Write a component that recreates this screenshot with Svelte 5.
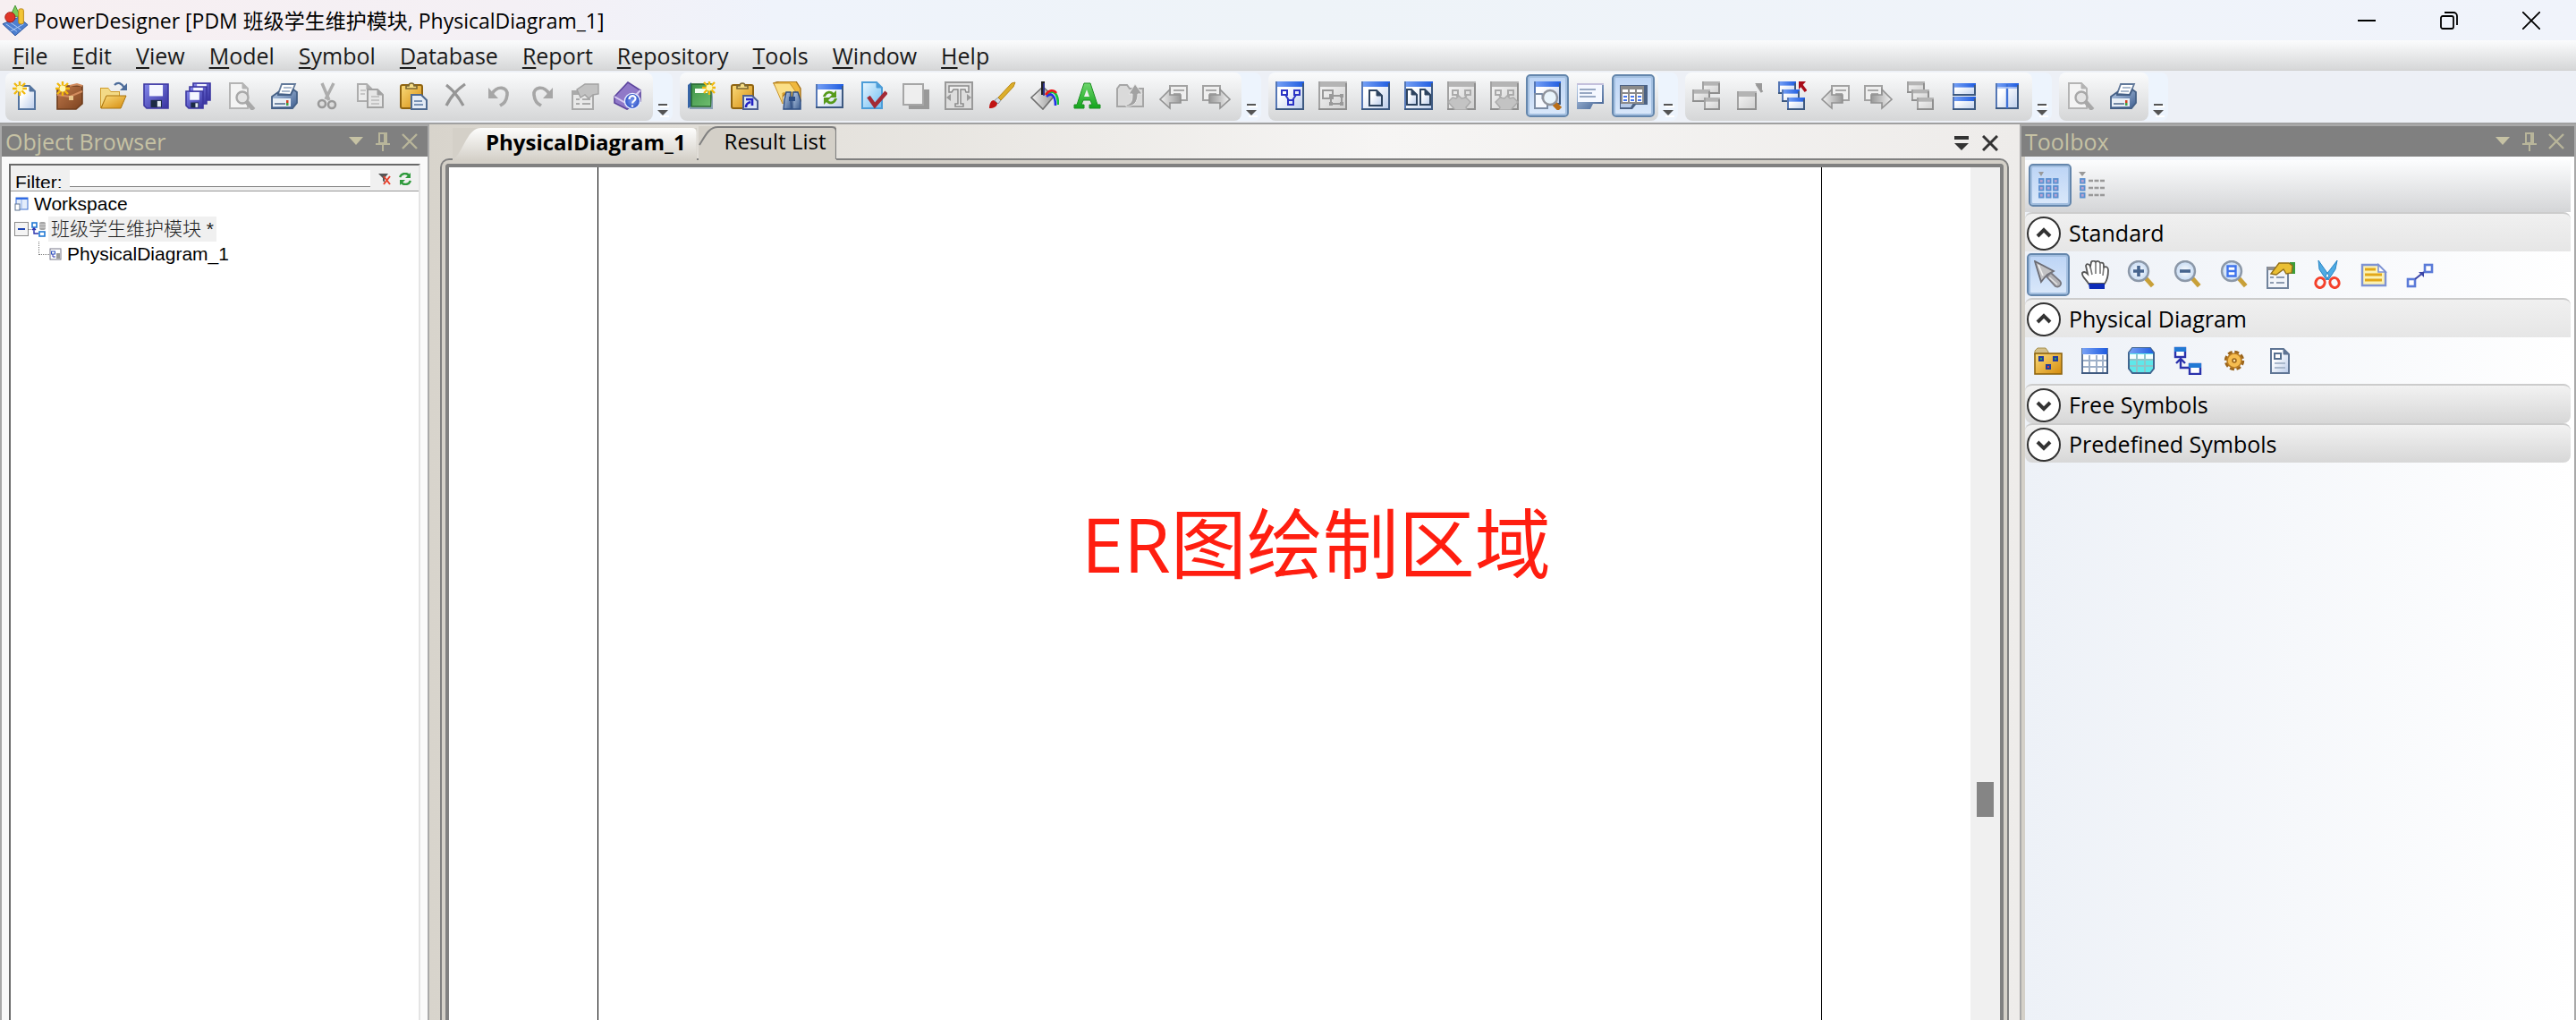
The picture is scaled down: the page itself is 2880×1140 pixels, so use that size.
<script>
  // Icons are drawn on a 32-unit grid.
  const win = (x, y, w, h, t = 'b') => {
    const c = { b: ['#5577b5', 'url(#gTitle)', 'url(#gBody)', '#3d5980'], g: ['#a2a2a2', '#b4b4b4', 'url(#gBodyG)', '#8f8f8f'] }[t];
    return `<rect x="${x}" y="${y}" width="${w}" height="${h}" fill="${c[2]}"/><rect x="${x}" y="${y}" width="${w}" height="${Math.min(6, h / 3)}" fill="${c[1]}"/><path d="M${x + 1} ${y}V${y + h}" stroke="${c[0]}" stroke-width="2"/><path d="M${x} ${y + h - 1}H${x + w - 1}V${y + 2}" fill="none" stroke="${c[3]}" stroke-width="2"/>`;
  };
  const spark = (x, y) => `<path d="M${x} ${y - 8}v16M${x - 8} ${y}h16M${x - 6} ${y - 6}l12 12M${x + 6} ${y - 6}l-12 12" stroke="#f2b90c" stroke-width="2.4"/><circle cx="${x}" cy="${y}" r="3.4" fill="#fff7b0"/>`;
  const lens = (x, y, r, c = '#8c98a8') => `<path d="M${x + r * 0.7} ${y + r * 0.7}l8 9" stroke="${c === '#a8a8a8' ? '#a8a8a8' : '#c8a038'}" stroke-width="5"/><circle cx="${x}" cy="${y}" r="${r}" fill="${c === '#a8a8a8' ? '#e4e4e4' : 'url(#gLens)'}" stroke="${c}" stroke-width="2.4"/>`;
  const page = (x, y, w, h, s, f) => `<path d="M${x} ${y}h${w - 6}l6 6v${h - 6}h-${w}z" fill="${f}" stroke="${s}" stroke-width="2"/><path d="M${x + w - 6} ${y}v6h6" fill="${s}" stroke="${s}"/>`;
  const nodes = (s, x, y) => `<g fill="none" stroke="${s}" stroke-width="2"><rect x="${x}" y="${y}" width="6" height="5"/><rect x="${x + 14}" y="${y}" width="6" height="5"/><rect x="${x + 7}" y="${y + 11}" width="6" height="5"/><path d="M${x + 4} ${y + 5}l4 6M${x + 16} ${y + 5}l-4 6"/></g>`;
  const arrowNote = (flip) => `<g${flip ? ' transform="matrix(-1 0 0 1 32 0)"' : ''}><path d="M12 5h19v16H12z" fill="#efefef" stroke="#a2a2a2" stroke-width="2"/><path d="M16 10h12M16 14h8" stroke="#aaa" stroke-width="2"/><path d="M1 20L12 9v6h12v9H12v6z" fill="url(#gGrey)" stroke="#929292" stroke-width="1.6"/></g>`;
  const clip = `<rect x="2" y="4" width="24" height="26" rx="2" fill="url(#gGold)" stroke="#8f6310" stroke-width="2"/><path d="M8 8h12V5h-3a3 3 0 0 0-6 0H8z" fill="#f5dc84" stroke="#7b6733" stroke-width="1.6"/>`;
  const disk = (x, y, w) => `<path d="M${x} ${y}h${w}v${w}h-${w - 3}l-3-3z" fill="url(#gDisk)" stroke="#3b36a0" stroke-width="1.6"/><rect x="${x + w * 0.22}" y="${y + 1}" width="${w * 0.56}" height="${w * 0.46}" fill="#f4f6ff"/><rect x="${x + w * 0.28}" y="${y + w * 0.66}" width="${w * 0.46}" height="${w * 0.3}" fill="#1c2b44"/><rect x="${x + w * 0.55}" y="${y + w * 0.7}" width="${w * 0.15}" height="${w * 0.24}" fill="#e6edf5"/>`;
  const printer = `<path d="M9 14L13 3h15l-5 12z" fill="#fff" stroke="#62799a" stroke-width="1.8"/><path d="M15 7h9M13 11h9" stroke="#8ea2bd" stroke-width="1.6"/><path d="M2 17l7-5v3h14l3-6 4 3v12l-5 6H2z" fill="url(#gSteel)" stroke="#456086" stroke-width="1.8"/><rect x="3" y="19" width="20" height="9" fill="#e9f0f7"/><path d="M5 25h12" stroke="#7288a5" stroke-width="2"/><rect x="18" y="21" width="2.5" height="3" fill="#d2401f"/><rect x="18" y="24" width="2.5" height="3" fill="#42a044"/>`;
  const preview = `${page(3, 2, 20, 28, '#b4b4b4', '#f4f4f4')}${lens(17, 18, 6.5, '#a8a8a8')}`;
  const hand = (c, s) => `<path d="M1 23l5-5 4 1 3-3 3 3 5-1 5 5-5 6 1 3H9z" fill="${c}" stroke="${s}" stroke-width="1.4"/>`;

  const icons = {
    new: page(7, 5, 18, 26, '#54749f', 'url(#gBody)') + spark(8, 8),
    project: `<path d="M2 9l6-4h22v20l-7 6H2z" fill="url(#gBrown)" stroke="#6e3c1c" stroke-width="1.6"/><path d="M2 15l14 2 14-6M16 5l8-2 6 2" fill="none" stroke="#d28b5d" stroke-width="2"/><path d="M15 16h5v5h-5z" fill="#e8c489"/>` + spark(8, 8),
    open: `<path d="M2 7h9l3 4h10v19H2z" fill="#cf9b28"/><path d="M3 8h8l3 4h9v4H9L3 28z" fill="#f3da86"/><path d="M3 30L9 16h22l-6 14z" fill="url(#gGold)" stroke="#a97410"/><path d="M18 4c4-4 8-2 11 3" fill="none" stroke="#4d6c9a" stroke-width="2.4"/><path d="M32 2v8h-8z" fill="#4d6c9a"/>`,
    save: disk(3, 3, 27),
    saveall: disk(10, 2, 19) + disk(6, 6, 19) + disk(2, 11, 19),
    preview, printer,
    cut: `<path d="M10 2l8 19M23 2l-9 18" stroke="#adadad" stroke-width="3.4"/><g fill="#dcdcdc" stroke="#999" stroke-width="2.6"><circle cx="10" cy="25" r="4"/><circle cx="21" cy="26" r="4"/></g>`,
    copy: page(2, 3, 16, 19, '#adadad', '#ececec') + page(13, 9, 17, 20, '#a2a2a2', '#e6e6e6') + `<path d="M5 10h6M5 14h5M17 17h9M17 21h9M17 25h9" stroke="#bbb" stroke-width="1.6"/>`,
    paste: clip + `<path d="M14 15h11l6 6v10H14z" fill="#e3ebf5" stroke="#4e6a90" stroke-width="2"/><path d="M17 22h9M17 26h10" stroke="#7a93b5" stroke-width="2"/>`,
    del: `<path d="M5 4c8 6 14 14 19 23M26 3C17 9 10 17 5 27" fill="none" stroke="#969696" stroke-width="3.2"/>`,
    undo: `<path d="M4 7v12h11z" fill="#a6a6a6"/><path d="M8 14C14 4 26 6 25 15s-5 10-8 12" fill="none" stroke="#a6a6a6" stroke-width="3.6"/>`,
    redo: `<path d="M28 7v12H17z" fill="#a6a6a6"/><path d="M24 14C18 4 6 6 7 15s5 10 8 12" fill="none" stroke="#a6a6a6" stroke-width="3.6"/>`,
    props: `<rect x="2" y="11" width="23" height="20" fill="#e8e8e8" stroke="#a9a9a9" stroke-width="2"/><path d="M3 13h21" stroke="#aaa" stroke-width="4"/><path d="M6 20h4M6 25h4M13 20h9M13 25h9" stroke="#aaa" stroke-width="2"/><path d="M7 9l9-6h15v11l-6 1-5 4-4-4-5 3z" fill="#c2c2c2" stroke="#a2a2a2" stroke-width="1.4"/>`,
    help: `<path d="M1 17L16 1l14 9v12L15 31 1 24z" fill="#9079c8" stroke="#5d459e" stroke-width="1.6"/><path d="M1 17l14 8 15-15" fill="none" stroke="#d9cdf2" stroke-width="2"/><circle cx="21" cy="22" r="8.6" fill="url(#gHelp)" stroke="#e6ecff" stroke-width="1.4"/><path d="M17.5 20c0-5 7-5 7-1 0 3-3.4 2.6-3.4 5.4M21 26.6v2" fill="none" stroke="#fff" stroke-width="2.2"/>`,

    book: `<path d="M1 4l4-3v27l-4 2z" fill="#3664a5"/><rect x="5" y="3" width="22" height="25" fill="url(#gGreen)" stroke="#286b34" stroke-width="1.6"/><path d="M3 29h24l2-23v25H3z" fill="#8aa0b4"/><rect x="9" y="8" width="14" height="5" fill="#f3fff0"/>` + spark(25, 7),
    pasteLink: clip + `<path d="M15 16h10l6 6v9H15z" fill="#dce6f5" stroke="#4d5f92" stroke-width="2"/><path d="M18 29c0-4 2-5 5-6M18 20h7v7" fill="none" stroke="#2222c4" stroke-width="2.6"/>`,
    find: `<path d="M1 2l6-2h19l5 8v14l-7 2-8-13-5 6z" fill="#f0b83c" stroke="#a5721a" stroke-width="1.4"/><path d="M1 2h18l7 10-15 1v12z" fill="#fbdf86" stroke="#c9942c"/><g fill="url(#gSteel)" stroke="#2c4d83" stroke-width="1.4"><path d="M15 12h5v8l1 11h-9l1-10z"/><path d="M23 12h5l3 9v10h-9v-11z"/></g><rect x="18" y="17" width="7" height="5" fill="#2c4d83"/>`,
    refresh: win(0, 3, 31, 27) + `<path d="M8 17c2-7 9-8 12-4l3-3v8h-8l3-3c-3-3-6-1-7 2zM24 19c-2 7-9 8-12 4l-3 3v-8h8l-3 3c3 3 6 1 7-2z" fill="#569a1c"/>`,
    check: page(4, 1, 22, 29, '#4c9dd8', 'url(#gSky)') + `<path d="M11 17l7 10L31 12" fill="none" stroke="#a32a35" stroke-width="4.4"/>`,
    shadow: `<path d="M7 9h24v22H8z" fill="#999"/><rect x="2" y="3" width="22" height="23" fill="#eee" stroke="#a6a6a6" stroke-width="2"/>`,
    text: `<rect x="1" y="1" width="30" height="30" fill="#ddd" stroke="#999" stroke-width="2"/><path d="M5 5h22v7h-3l-1-3h-5v16h3v3h-9v-3h3V9h-5l-2 3H5z" fill="#eee" stroke="#8b8b8b" stroke-width="1.5"/><path d="M2 18l5-4v8zM30 18l-5-4v8z" fill="#999"/>`,
    brush: `<path d="M2 30c0-5 2-9 5-9l4 3c0 4-4 6-9 6z" fill="#c01414"/><path d="M8 21l4 4 3-4-3-3z" fill="#d4dce5" stroke="#8b97a6"/><path d="M12 18L27 2l4-1-2 5-14 15z" fill="#dcae2a" stroke="#b88714"/>`,
    fill: `<path d="M1 18L14 6l12 11-12 14z" fill="url(#gGrey)" stroke="#6e6e6e" stroke-width="1.6"/><path d="M14 0v15" stroke="#222" stroke-width="4"/><path d="M15 2v14" stroke="#3036a0" stroke-width="1.6"/><path d="M18 14c7-5 13-2 13 12" fill="none" stroke="#12c33b" stroke-width="2.6"/><path d="M18 17c5-5 10-2 10 10" fill="none" stroke="#2031e8" stroke-width="2.6"/><path d="M17 15c4-6 9-6 12-2" fill="none" stroke="#f01616" stroke-width="2.6"/>`,
    font: `<path d="M12 2h7l8 24h3v4H18v-4h3l-2-5h-8l-2 5h3v4H1v-4h3z" fill="url(#gA)" stroke="#1c8f22"/><path d="M15 9l3 8h-6z" fill="#f0f0f0"/>`,
    folderUp: `<path d="M1 8l3-4h8l3 4h15v20H1z" fill="#dadada" stroke="#a6a6a6" stroke-width="2"/><path d="M11 26c6-1 7-4 7-12h-4l7-11 8 11h-5c0 9-4 14-13 14z" fill="#a2a2a2" stroke="#e8e8e8"/>`,
    back: arrowNote(false), forward: arrowNote(true),

    diagram: win(0, 0, 32, 32) + nodes('#2b34c4', 7, 10),
    group: win(0, 0, 32, 32, 'g') + `<g fill="none" stroke="#999" stroke-width="2"><rect x="5" y="10" width="11" height="9"/><rect x="14" y="16" width="12" height="9"/></g><path d="M12 14h4v4h-4zM24 14h4v4h-4zM12 23h4v4h-4zM24 23h4v4h-4z" fill="#999"/>`,
    onePage: win(0, 0, 32, 32) + page(9, 10, 14, 17, '#2e4460', 'url(#gBody)'),
    twoPage: win(0, 0, 32, 32) + page(3, 9, 11, 17, '#2e4460', 'url(#gBody)') + page(18, 9, 11, 17, '#2e4460', 'url(#gBody)'),
    handLeft: win(0, 0, 32, 32, 'g') + nodes('#aaa', 6, 10) + hand('#c3c3c3', '#aaa'),
    handRight: win(0, 0, 32, 32, 'g') + nodes('#aaa', 6, 10) + `<g transform="matrix(-1 0 0 1 32 0)">${hand('#c3c3c3', '#aaa')}</g>`,
    zoomWin: win(1, 0, 30, 26) + page(2, 14, 14, 16, '#7b8ca4', '#f6f9fe') + `<path d="M23 24l7 7" stroke="#b96d16" stroke-width="6"/><circle cx="19" cy="18" r="8" fill="#e9f4fb" stroke="#90949c" stroke-width="2.4"/>`,
    note: `<path d="M1 3h30v22H19l-3 6H1z" fill="url(#gSteel)"/><path d="M2 4h27v19H2z" fill="#f5f8ff"/><path d="M4 9h18M4 13h14M4 17h18" stroke="#7a8db0" stroke-width="1.6"/><path d="M1 3h30" stroke="#c4c0dc" stroke-width="2"/>`,
    tableNote: `<path d="M1 4h31v22H19l-4 5H1z" fill="#4c6284"/><path d="M2 24h14l-3 5H2z" fill="#b7cbe8"/><rect x="3" y="6" width="24" height="18" fill="#fff" stroke="#8b8b8b" stroke-width="2"/><path d="M3 8h24M3 13h24M11 6v18M19 6v18" stroke="#8b8b8b" stroke-width="2"/><path d="M5 17h4M13 17h4M21 17h4M5 21h4M13 21h4M21 21h4" stroke="#4778ee" stroke-width="2"/>`,

    winGroup: win(11, 0, 20, 14, 'g') + win(0, 9, 20, 14, 'g') + win(13, 18, 18, 14, 'g'),
    winOut: win(2, 11, 22, 21, 'g') + `<path d="M22 2h8v8z" fill="#999"/><path d="M24 3l6 9" stroke="#999" stroke-width="3"/>`,
    winCascadeRed: win(0, 0, 20, 14) + win(4, 9, 20, 14) + win(10, 18, 20, 14) + `<path d="M23 0h8l-8 9z" fill="#a90c19"/><path d="M25 3l6 8" stroke="#a90c19" stroke-width="3.4"/>`,
    winCascade: win(0, 0, 20, 13, 'g') + win(5, 9, 20, 13, 'g') + win(11, 18, 19, 14, 'g'),
    tileH: win(3, 2, 26, 14) + win(3, 17, 26, 15),
    tileV: win(3, 2, 26, 29) + `<path d="M16 3v27" stroke="#3f72d8" stroke-width="2.4"/><path d="M5 7h22" stroke="#fff" stroke-width="1"/>`,

    grid: `<path d="M3 1h6L6 6z" fill="#999"/>` + [4, 12, 20].flatMap((x) => [9, 17, 25].map((y) => `<rect x="${x}" y="${y}" width="4.6" height="4.6" fill="#b9a2cf" stroke="#5b90d0" stroke-width="1.8"/>`)).join(''),
    list: `<path d="M0 1h8L4 6z" fill="#999"/>` + [9, 17, 25].map((y) => `<rect x="2" y="${y}" width="4.6" height="4.6" fill="#b9a2cf" stroke="#5b90d0" stroke-width="1.8"/><path d="M11 ${y + 2}h18" stroke="#999" stroke-width="2.4" stroke-dasharray="5 1.5"/>`).join(''),
    pointer: `<path d="M1 1l7 23 4-5 3-3 7-4z" fill="#c2c2c4" stroke="#6c6c74" stroke-width="1.8"/><path d="M5 5l5 12" stroke="#efefef" stroke-width="1.6"/><path d="M14 18l5-4 10 9c3 4-1 8-5 6z" fill="#b2b2b6" stroke="#77777f" stroke-width="1.8"/><path d="M17 19l9 8" stroke="#e2e2e2" stroke-width="1.6"/>`,
    pan: `<path d="M9 26C7 22 1 18 2 14c2-2 4-1 6 1L6 6c1-3 4-2 5 1l1-5c1-2 4-2 5 0 2-2 4-1 5 1 3-1 4 0 4 3v2c3-2 5 0 5 3 0 7-1 11-4 15z" fill="#fff" stroke="#555" stroke-width="1.8"/><path d="M11 7l2 9M17 2v13M22 4v11M26 8l-1 9" stroke="#777" stroke-width="1.6"/><path d="M9 26h18v6H10z" fill="#0d2cb8"/>`,
    zoomIn: lens(13, 12, 11) + `<path d="M13 6v12M7 12h12" stroke="#46648e" stroke-width="3.6"/>`,
    zoomOut: lens(13, 12, 11) + `<path d="M7 12h12" stroke="#46648e" stroke-width="3.6"/>`,
    zoomPage: lens(13, 12, 11) + `<path d="M8.5 6.5h9v11h-9zM8 12h10" fill="#fff" stroke="#3e73ec" stroke-width="2.4"/>`,
    propsColor: `<rect x="1" y="8" width="23" height="23" fill="#f2f5fa" stroke="#71839c" stroke-width="2"/><path d="M1 9h23" stroke="#8f8f92" stroke-width="4"/><path d="M4 19h4M4 25h4M11 19h9M11 25h9" stroke="#8d9bb0" stroke-width="2"/><path d="M26 2h6v13h-6z" fill="#3c9c3a"/><path d="M5 15l9-12h11l4 3-1 8-6 1-3-5-8 6z" fill="#eabf33" stroke="#93701a" stroke-width="1.4"/>`,
    scissors: `<path d="M6 0l12 17-3 5L7 10zM27 0L14 17l3 5 8-12z" fill="#4fabe4" stroke="#2985c4"/><g fill="none" stroke="#f4402a" stroke-width="3"><ellipse cx="8" cy="25" rx="5" ry="5.6" transform="rotate(22 8 25)"/><ellipse cx="24" cy="25" rx="5" ry="5.6" transform="rotate(-22 24 25)"/></g>`,
    memo: `<path d="M3 5h18l8 8v15H3z" fill="#fcf2b4" stroke="#7e93d4" stroke-width="2.4"/><path d="M21 5v8h8z" fill="#fff" stroke="#7e93d4" stroke-width="1.6"/><path d="M6 10h12M6 16h19M6 22h19" stroke="#e2a818" stroke-width="3"/>`,
    link: `<g fill="#fff" stroke="#5a7ad8" stroke-width="2.6"><rect x="2" y="21" width="8" height="8"/><rect x="21" y="5" width="8" height="8"/></g><path d="M10 21L20 13" stroke="#3c46a8" stroke-width="2"/><path d="M14 13h6v6z" fill="#3c46a8"/>`,
    package: `<path d="M1 5l3-3h9l3 4v4H1z" fill="#d4c08a" stroke="#a8914e"/><rect x="1" y="8" width="30" height="23" fill="url(#gGold)" stroke="#8e640f" stroke-width="1.6"/><g fill="#2fa05c" stroke="#223c9c" stroke-width="2"><rect x="6" y="12" width="4" height="4"/><rect x="22" y="12" width="4" height="4"/><rect x="14" y="21" width="4" height="4" fill="#d43a3a"/></g>`,
    table: `<rect x="2" y="3" width="28" height="27" fill="#fff" stroke="#5f789c" stroke-width="2"/><rect x="2" y="2" width="28" height="7" fill="url(#gTitle)"/><path d="M3 16h26M3 23h26M10 10v19M18 10v19M25 10v19" stroke="#9eb0c8" stroke-width="2"/><path d="M1 30h29V9" fill="none" stroke="#3f5a80" stroke-width="2"/>`,
    view: `<path d="M6 2h20l4 5v18l-4 5H6l-4-5V7z" fill="#5ee8ea" stroke="#41658f" stroke-width="2"/><path d="M6 2h20l4 6H2z" fill="url(#gTitle)"/><path d="M3 9h26v5H3z" fill="#f2ffff"/><path d="M3 15h26M3 22h26M11 9v20M20 9v20" stroke="#8fc4c8" stroke-width="2"/>`,
    reference: `<g fill="#fff" stroke="#2b32ac" stroke-width="2.4"><rect x="2" y="2" width="11" height="10"/><rect x="18" y="20" width="12" height="11"/></g><path d="M1 1h13v5H1zM17 19h14v5H17z" fill="#2279d4"/><path d="M8 15v9h9M3 19l5-5 5 5" fill="none" stroke="#2b32ac" stroke-width="2.4"/>`,
    gear: `<circle cx="16" cy="16" r="9" fill="none" stroke="#9a641c" stroke-width="4.4" stroke-dasharray="4.6 2.47"/><circle cx="16" cy="16" r="8" fill="#f6bd50" stroke="#b97c22" stroke-width="1.6"/><circle cx="16" cy="16" r="2" fill="#fde7ae" stroke="#9a641c" stroke-width="1.6"/>`,
    file: page(5, 3, 20, 27, '#5f7594', 'url(#gBody)') + `<rect x="9" y="8" width="7" height="6" fill="#fff" stroke="#57708f" stroke-width="2"/><path d="M9 19h12M9 24h12" stroke="#a9b8cc" stroke-width="2"/>`,
  };

  const toolbars = [
    { name: 'Standard', tools: ['new', 'project', 'open', 'save', 'saveall', 'preview', 'printer', 'cut', 'copy', 'paste', 'del', 'undo', 'redo', 'props', 'help'] },
    { name: 'Diagram', tools: ['book', 'pasteLink', 'find', 'refresh', 'check', 'shadow', 'text', 'brush', 'fill', 'font', 'folderUp', 'back', 'forward'] },
    { name: 'View', tools: ['diagram', 'group', 'onePage', 'twoPage', 'handLeft', 'handRight', 'zoomWin', 'note', 'tableNote'] },
    { name: 'Window', tools: ['winGroup', 'winOut', 'winCascadeRed', 'back', 'forward', 'winCascade', 'tileH', 'tileV'] },
    { name: 'Print', tools: ['preview', 'printer'] },
  ];
  const menus = ['File', 'Edit', 'View', 'Model', 'Symbol', 'Database', 'Report', 'Repository', 'Tools', 'Window', 'Help'];
  const sections = [
    { title: 'Standard', tools: ['pointer', 'pan', 'zoomIn', 'zoomOut', 'zoomPage', 'propsColor', 'scissors', 'memo', 'link'] },
    { title: 'Physical Diagram', tools: ['package', 'table', 'view', 'reference', 'gear', 'file'] },
    { title: 'Free Symbols', tools: [] },
    { title: 'Predefined Symbols', tools: [] },
  ];
  let pressed = $state(['zoomWin', 'tableNote', 'grid', 'pointer']);
  let filter = $state('');
</script>

{#snippet icon(name)}
  <svg class="icon" viewBox="0 0 32 32" aria-hidden="true">{@html icons[name]}</svg>
{/snippet}

{#snippet tool(name)}
  <button class="tool" class:pressed={pressed.includes(name)} aria-label={name}>{@render icon(name)}</button>
{/snippet}

{#snippet panelHead(title)}
  <header class="panel-head">
    <h2>{title}</h2>
    <button aria-label="{title} options"><svg width="18" height="18" viewBox="0 0 18 18"><path d="M1 4h16l-8 9z" fill="#c6c2a4" /></svg></button>
    <button aria-label="Pin {title}"><svg width="18" height="22" viewBox="0 0 18 22"><path d="M5 2h8v11H5zM1 14h16M9 14v8M11 2v11" fill="none" stroke="#b8b59a" stroke-width="2" /></svg></button>
    <button aria-label="Close {title}"><svg width="18" height="18" viewBox="0 0 18 18"><path d="M1 1l16 16M17 1L1 17" stroke="#b8b59a" stroke-width="2.4" /></svg></button>
  </header>
{/snippet}

<svg class="defs" aria-hidden="true">
  <defs>
    <linearGradient id="gTitle" x2="1"><stop stop-color="#78a2f5" /><stop offset="1" stop-color="#1f5ce0" /></linearGradient>
    <linearGradient id="gBody" x2="1" y2="1"><stop offset=".3" stop-color="#fff" /><stop offset="1" stop-color="#b9cbea" /></linearGradient>
    <linearGradient id="gBodyG" x2="1" y2="1"><stop offset=".2" stop-color="#f0f0f0" /><stop offset="1" stop-color="#cdcdcd" /></linearGradient>
    <linearGradient id="gGold" x2="1" y2="1"><stop stop-color="#fbdc7c" /><stop offset="1" stop-color="#d58b0c" /></linearGradient>
    <linearGradient id="gBrown" x2="1" y2="1"><stop stop-color="#c07a4c" /><stop offset="1" stop-color="#7c421f" /></linearGradient>
    <linearGradient id="gDisk" x2="1" y2="1"><stop stop-color="#8488ec" /><stop offset="1" stop-color="#37329f" /></linearGradient>
    <linearGradient id="gSteel" x2="1" y2="1"><stop stop-color="#bcd0ea" /><stop offset="1" stop-color="#3c5c8e" /></linearGradient>
    <linearGradient id="gGrey" x2="1"><stop stop-color="#f2f2f2" /><stop offset="1" stop-color="#989898" /></linearGradient>
    <linearGradient id="gGreen" x2="1" y2="1"><stop stop-color="#3f9448" /><stop offset="1" stop-color="#6fbd6f" /></linearGradient>
    <linearGradient id="gSky" x2="1" y2="1"><stop stop-color="#eaf7ff" /><stop offset="1" stop-color="#6dbdf2" /></linearGradient>
    <linearGradient id="gA" x2="0" y2="1"><stop stop-color="#6ed56c" /><stop offset="1" stop-color="#12a41b" /></linearGradient>
    <radialGradient id="gLens"><stop stop-color="#fff" /><stop offset="1" stop-color="#c5daf3" /></radialGradient>
    <radialGradient id="gHelp"><stop stop-color="#7e9cf2" /><stop offset="1" stop-color="#2c50c4" /></radialGradient>
  </defs>
</svg>

<div class="app">
  <header class="titlebar">
    <svg class="logo" viewBox="0 0 32 36" aria-hidden="true">
      <path d="M1 22L20 14l11 9-15 13z" fill="#4d7fd0" stroke="#2c529a" /><path d="M5 22l13 9M10 20l13 9M26 22l-16 9" stroke="#b4cff6" />
      <path d="M16 0l6 13H10z" fill="#7fcb5a" stroke="#3e8f31" /><circle cx="10" cy="14" r="6" fill="#e03528" stroke="#a31912" /><rect x="20" y="4" width="6" height="18" rx="2" fill="#f3c536" stroke="#b68212" />
    </svg>
    <h1>PowerDesigner [PDM 班级学生维护模块, PhysicalDiagram_1]</h1>
    <div class="caption">
      <button aria-label="Minimize"><svg width="20" height="20" viewBox="0 0 20 20"><path d="M0 10h20" stroke="#000" stroke-width="2" /></svg></button>
      <button aria-label="Restore"><svg width="20" height="20" viewBox="0 0 20 20"><g fill="none" stroke="#000" stroke-width="1.8"><rect x="1" y="5" width="14" height="14" rx="2" /><path d="M5 1h10a4 4 0 0 1 4 4v10" /></g></svg></button>
      <button aria-label="Close"><svg width="20" height="20" viewBox="0 0 20 20"><path d="M0 0l20 20M20 0L0 20" stroke="#000" stroke-width="1.8" /></svg></button>
    </div>
  </header>

  <nav class="menubar">
    {#each menus as m}<button><u>{m[0]}</u>{m.slice(1)}</button>{/each}
  </nav>

  <div class="toolbars">
    {#each toolbars as bar}
      <div class="bar" role="toolbar" aria-label={bar.name}>
        <div class="tools">{#each bar.tools as t}{@render tool(t)}{/each}</div>
        <button class="more" aria-label="More {bar.name} buttons"><svg width="14" height="16" viewBox="0 0 14 16"><path d="M4 4h10M4 15h10" stroke="#fff" stroke-width="2" /><path d="M2 2h10" stroke="#555" stroke-width="2" /><path d="M1 8h12l-6 6z" fill="#555" /></svg></button>
      </div>
    {/each}
  </div>

  <main>
    <aside class="panel browser">
      {@render panelHead('Object Browser')}
      <div class="browser-body">
        <div class="browser-frame">
          <div class="filter">
            <label for="filter">Filter:</label>
            <input id="filter" bind:value={filter} />
            <button aria-label="Clear filter"><svg width="14" height="14" viewBox="0 0 14 14"><path d="M0 1h11L7 6v5l-2-2V6z" fill="#555" /><path d="M6 4l7 9M13 4l-7 9" stroke="#e8412c" stroke-width="2" /></svg></button>
            <button aria-label="Refresh"><svg width="14" height="14" viewBox="0 0 14 14"><path d="M1 5c2-5 8-5 10-2M13 9c-2 5-8 5-10 2" fill="none" stroke="#2f9a3c" stroke-width="2.4" /><path d="M13 0v6H7zM1 14V8h6z" fill="#2f9a3c" /></svg></button>
          </div>
          <ul class="tree">
            <li class="row"><svg width="16" height="16" viewBox="0 0 16 16"><rect x="2" y="1" width="13" height="13" fill="#e4edfb" stroke="#3d6fd0" /><path d="M2 2h13" stroke="#2f6be6" stroke-width="2" /><path d="M8 3v11" stroke="#8fb0ea" /><rect x="1" y="8" width="5" height="7" fill="#fff" stroke="#5c7290" /></svg><span>Workspace</span></li>
            <li class="row model">
              <button class="twisty" aria-label="Collapse"></button>
              <i class="dots"></i>
              <svg width="16" height="18" viewBox="0 0 16 18"><rect x="1" y="2" width="5" height="5" fill="#fff" stroke="#2279d4" stroke-width="1.6" /><rect x="9" y="12" width="6" height="5" fill="#fff" stroke="#2279d4" stroke-width="1.6" /><path d="M3 8v6h5M1 10l2-2 2 2" fill="none" stroke="#2b32ac" stroke-width="1.4" /><rect x="9" y="1" width="7" height="9" rx="2" fill="#a5a5a5" /><path d="M9 4h7M9 7h7" stroke="#ddd" /></svg>
              <span class="current">班级学生维护模块 *</span>
            </li>
            <li class="row diagram">
              <i class="elbow"></i>
              <svg width="14" height="14" viewBox="0 0 14 14"><rect x="1" y="1" width="12" height="12" fill="#fff" stroke="#778" /><rect x="2.5" y="4" width="4" height="3" fill="none" stroke="#2b4fc0" /><path d="M4 7v3h3" fill="none" stroke="#2b32ac" /><rect x="8" y="6" width="4" height="6" fill="#999" /></svg>
              <span>PhysicalDiagram_1</span>
            </li>
          </ul>
        </div>
      </div>
    </aside>

    <section class="editor">
      <div class="tabs">
        <button class="tab active"><svg viewBox="0 0 274 36" preserveAspectRatio="none" aria-hidden="true"><defs><linearGradient id="gTab" x2="0" y2="1"><stop stop-color="#fdfdfc" /><stop offset="1" stop-color="#d4d0c8" /></linearGradient></defs><path d="M0 36C12 28 16 0 32 0H269q5 0 5 5V36z" fill="url(#gTab)" /></svg><span>PhysicalDiagram_1</span></button>
        <button class="tab"><svg viewBox="0 0 158 38" preserveAspectRatio="none" aria-hidden="true"><path d="M1 21C8 10 12 1 22 1H152q5 0 5 5V37" fill="none" stroke="#808080" stroke-width="2" /></svg><span>Result List</span></button>
        <div class="tab-actions">
          <button aria-label="Tab list"><svg width="16" height="18" viewBox="0 0 16 18"><path d="M0 3h16" stroke="#333" stroke-width="4" /><path d="M0 9h16l-8 8z" fill="#333" /></svg></button>
          <button aria-label="Close tab"><svg width="18" height="18" viewBox="0 0 18 18"><path d="M1 1l16 16M17 1L1 17" stroke="#333" stroke-width="3" /></svg></button>
        </div>
      </div>
      <div class="frame">
        <div class="canvas">
          <div class="page"><p>ER图绘制区域</p></div>
          <div class="scroll"><div class="thumb"></div></div>
        </div>
      </div>
    </section>

    <aside class="panel toolbox">
      {@render panelHead('Toolbox')}
      <div class="toolbox-body">
        <div class="modes">{@render tool('grid')}{@render tool('list')}</div>
        {#each sections as s}
          <button class="section" class:open={s.tools.length > 0} aria-expanded={s.tools.length > 0}>
            <svg width="40" height="40" viewBox="0 0 40 40" aria-hidden="true"><circle cx="20" cy="20" r="18" fill="#fff" stroke="#333" stroke-width="2" /><path d={s.tools.length ? 'M13 23l7-7 7 7' : 'M13 17l7 7 7-7'} fill="none" stroke="#333" stroke-width="4" /></svg>
            <span>{s.title}</span>
          </button>
          {#if s.tools.length}<div class="palette">{#each s.tools as t}{@render tool(t)}{/each}</div>{/if}
        {/each}
      </div>
    </aside>
  </main>
</div>

<style>
  :global(body) { margin: 0; }
  .app { min-height: 100vh; display: flex; flex-direction: column; overflow: hidden; background: #edf0f6; color: #000; font: 25px/32px "Open Sans", "Noto Sans CJK SC", sans-serif; }
  .app * { box-sizing: border-box; }
  button { border: 0; padding: 0; margin: 0; background: none; font: inherit; color: inherit; display: flex; align-items: center; justify-content: center; }
  h1, h2, p, ul { margin: 0; padding: 0; font-size: inherit; font-weight: 400; }
  .defs { position: absolute; width: 0; height: 0; }
  .icon { width: 32px; height: 32px; display: block; }

  .titlebar { height: 45px; flex: none; display: flex; align-items: center; padding: 0 4px 0 2px; background: linear-gradient(90deg, #f7eff1, #f4f0f5 20%, #eff3fb 30%, #eef3f8 50%, #f0f3fb); }
  .logo { width: 30px; height: 34px; margin-right: 6px; }
  h1 { flex: 1; font-size: 23px; }
  .caption { display: flex; }
  .caption button { width: 92px; height: 42px; }

  .menubar { height: 34px; flex: none; display: flex; gap: 27px; padding: 0 14px; background: linear-gradient(#fbfcfd, #d6d7d8); border-bottom: 1px solid #cfcfcf; color: #1a1a1a; }
  .menubar u { text-underline-offset: 3px; text-decoration-thickness: 2px; }

  .toolbars { height: 60px; flex: none; display: flex; align-items: flex-start; gap: 8px; padding: 2px 6px 0; border-bottom: 2px solid #a0a0a0; }
  .bar { display: flex; height: 54px; background: #edf4fd; border-radius: 8px; }
  .tools { display: flex; padding: 2px 4px 4px 0; border-radius: 8px; background: linear-gradient(#fafbfc, #d5d6d7); }
  .tool { width: 48px; height: 48px; flex: none; border-radius: 5px; }
  .tool.pressed { border: 2px solid #6486ac; box-shadow: inset 0 0 0 2px #a3bfe0; background: linear-gradient(#bcd4f5, #dae8fa); }
  .more { width: 22px; align-items: flex-end; padding-bottom: 4px; }

  main { flex: 1; display: flex; min-height: 0; }
  .panel { flex: none; display: flex; flex-direction: column; border: 2px solid #a9a9a9; border-bottom: 0; }
  .panel-head { height: 34px; flex: none; display: flex; align-items: center; gap: 10px; padding: 0 10px 0 4px; background: #808080; color: #c6c2a4; }
  .panel-head h2 { flex: 1; }
  .panel-head button { width: 20px; }

  .browser { width: 480px; }
  .browser-body { flex: 1; display: flex; padding: 8px 8px 0; background: #fafafa; }
  .browser-frame { flex: 1; border: 2px solid #696969; border-right-color: #e4e4e4; border-bottom: 0; background: #fff; font: 21px/28px "Liberation Sans", "Noto Sans CJK SC", sans-serif; }
  .filter { height: 29px; display: flex; align-items: flex-start; padding: 5px 8px 0 5px; background: #f0f0f0; border-bottom: 1px solid #999; }
  .filter label { height: 20px; width: 61px; overflow: hidden; }
  .filter input { flex: 1; min-width: 0; height: 19px; border: 0; border-bottom: 1px solid #888; background: #fff; padding: 0; outline: 0; }
  .filter button { margin-left: 9px; height: 19px; }
  .tree { list-style: none; }
  .row { height: 28px; display: flex; align-items: center; padding-left: 4px; }
  .row span { padding-left: 6px; }
  .row .current { margin-left: 3px; padding: 0 3px; background: #f0f0f0; color: #222; font-weight: 300; }
  .twisty { width: 16px; height: 16px; border: 1px solid #8c8c8c; background: linear-gradient(#1f47b4, #1f47b4) center / 8px 2px no-repeat #f4f4f4; }
  .dots { width: 3px; border-top: 1px dotted #777; }
  .diagram { padding-left: 31px; }
  .elbow { width: 12px; height: 15px; align-self: flex-start; border: 1px dotted #777; border-top: 0; border-right: 0; }

  .editor { flex: 1; min-width: 0; display: flex; flex-direction: column; padding: 0 12px; background: linear-gradient(90deg, #d8d4cc, #f6f5f4 60%, #eeecea); }
  .tabs { height: 40px; flex: none; display: flex; align-items: flex-end; padding-left: 14px; margin-bottom: -2px; position: relative; z-index: 1; }
  .tab { position: relative; height: 38px; padding: 0 12px 5px 29px; font-size: 24px; background: #d4d0c8; }
  .tab.active { height: 36px; margin-right: 2px; padding: 0 12px 5px 37px; font-weight: 700; }
  .tab svg { position: absolute; inset: 0; width: 100%; height: 100%; }
  .tab span { position: relative; }
  .tab-actions { margin-left: auto; display: flex; align-items: center; gap: 15px; height: 38px; padding-right: 12px; }
  .frame { flex: 1; display: flex; padding: 4px 4px 0; border: 2px solid #808080; border-bottom: 0; border-radius: 10px 10px 0 0; background: #d4d0c8; }
  .canvas { flex: 1; display: flex; border: 4px solid #808080; border-bottom: 0; border-radius: 4px 4px 0 0; background: #fff; }
  .page { flex: 1; position: relative; margin: 0 166px; border: 1px solid #000; border-width: 0 1px; }
  .page p { position: absolute; left: 540px; top: 360px; font-size: 85px; line-height: 120px; color: #ff1e10; white-space: nowrap; }
  .scroll { width: 33px; flex: none; padding-top: 687px; background: #f0f0f0; }
  .thumb { width: 19px; height: 39px; margin: 0 auto; background: #858585; }

  .toolbox { width: 622px; }
  .toolbox-body { flex: 1; display: flex; flex-direction: column; padding: 4px 4px 0 0; border-left: 4px solid #d4d0c8; background: linear-gradient(90deg, #edf1f7, #fff); }
  .modes { height: 58px; display: flex; padding: 4px; background: linear-gradient(#fcfdfe, #d4d5d7); }
  .section { height: 44px; flex: none; justify-content: flex-start; gap: 8px; padding: 2px 1px 0; border-top: 2px solid #ccc; border-radius: 8px; background: linear-gradient(#f2f2f2, #d7d7d7); }
  .section.open { border-radius: 8px 8px 0 0; background: linear-gradient(#f0f0f0, #e6e6e6); }
  .section span { padding-bottom: 2px; }
  .palette { height: 52px; display: flex; gap: 4px; padding: 2px; }
</style>
